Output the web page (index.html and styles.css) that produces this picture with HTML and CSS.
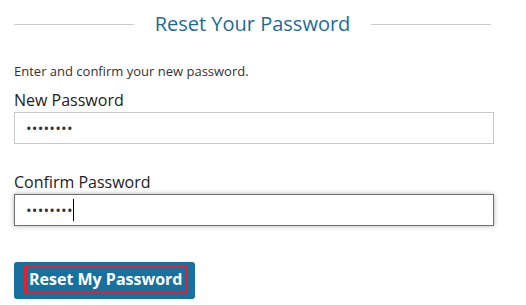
FILE: index.html
```html
<!DOCTYPE html>
<html lang="en">
<head>
    <meta charset="UTF-8">
    <title>Reset Your Password</title>
    <link rel="stylesheet" href="styles.css">
</head>
<body>
<div class="heading">
    <span class="rule"></span>
    <h2>Reset Your Password</h2>
    <span class="rule"></span>
</div>

<p class="intro">Enter and confirm your new password.</p>

<label class="field">
    <span class="label-text">New Password</span>
    <input type="password" value="passw0rd">
</label>

<label class="field second">
    <span class="label-text">Confirm Password</span>
    <span class="input-wrap">
        <input class="focused" type="password" value="passw0rd">
        <span class="caret"></span>
    </span>
</label>

<button class="submit" type="button"><span class="submit-text">Reset My Password</span></button>
</body>
</html>
```

FILE: styles.css
```css
:root {
    --text: #222222;
    --title: #1c6b97;
    --rule: #cccccc;
    --border: #c8c8c8;
    --border-focus: #6f6f6f;
    --accent: #17709d;
    --ring: #e5202e;
}

* {
    box-sizing: border-box;
}

body {
    margin: 0;
    padding: 10px 14px 0;
    font-family: 'Open Sans', sans-serif;
    color: var(--text);
    background: #ffffff;
}

.heading {
    display: flex;
    align-items: center;
    width: 477px;
}

.heading h2 {
    margin: 0 21px;
    font-size: 20px;
    line-height: 28px;
    font-weight: 400;
    color: var(--title);
}

.rule {
    flex: 1;
    height: 1px;
    background: var(--rule);
}

.intro {
    margin: 25px 0 0;
    font-size: 13px;
    line-height: 16px;
    color: #333333;
}

.field {
    display: block;
    margin-top: 11px;
}

.field.second {
    margin-top: 28px;
}

.label-text {
    display: block;
    font-size: 16px;
    line-height: 20px;
    margin-bottom: 2px;
}

input {
    display: block;
    width: 480px;
    height: 32px;
    padding: 0 11px;
    border: 1px solid var(--border);
    border-radius: 0;
    background: #fff;
    font-family: 'Open Sans', sans-serif;
    font-size: 15px;
    letter-spacing: 0.2px;
    color: #333;
    outline: none;
}

input.focused {
    border-color: var(--border-focus);
    box-shadow: 0 0 5px rgba(0, 0, 0, 0.3);
}

.input-wrap {
    position: relative;
    display: block;
}

.caret {
    position: absolute;
    left: 59px;
    top: 5px;
    width: 1px;
    height: 22px;
    background: #000;
}

.submit {
    display: block;
    margin-top: 36px;
    width: 181px;
    height: 37px;
    padding: 3px 7px 5px 10px;
    border: none;
    border-radius: 3px;
    background: var(--accent);
    font-family: 'Open Sans', sans-serif;
    cursor: pointer;
}

.submit-text {
    display: block;
    height: 29px;
    border: 3px solid var(--ring);
    font-size: 16px;
    line-height: 22px;
    font-weight: 700;
    color: #ffffff;
    text-align: left;
    padding: 0 2px;
}
```
